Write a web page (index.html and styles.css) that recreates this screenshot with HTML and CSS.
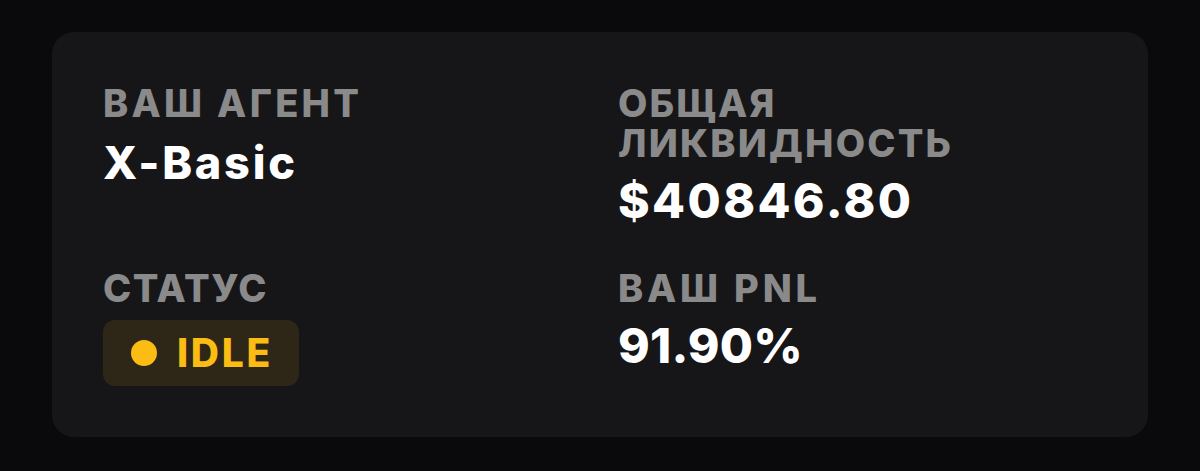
FILE: index.html
```html
<!DOCTYPE html>
<html lang="ru">
<head>
<meta charset="utf-8">
<title>Agent</title>
<link rel="stylesheet" href="styles.css">
</head>
<body>
<div class="card">
  <div class="cell">
    <div class="label label-agent">ВАШ АГЕНТ</div>
    <div class="value value-sm">X-Basic</div>
  </div>
  <div class="cell">
    <div class="label label-multi"><span>ОБЩАЯ</span><span>ЛИКВИДНОСТЬ</span></div>
    <div class="value value-lg">$40846.80</div>
  </div>
  <div class="cell">
    <div class="label label-status">СТАТУС</div>
    <div class="badge"><span class="dot"></span><span class="badge-text">IDLE</span></div>
  </div>
  <div class="cell">
    <div class="label label-wide">ВАШ PNL</div>
    <div class="value value-lg value-tight">91.90%</div>
  </div>
</div>
</body>
</html>
```
FILE: styles.css
```css
html, body {
  margin: 0;
  padding: 0;
  background: #0a0a0c;
}
body {
  padding: 32px 52px;
  font-family: Inter, "Noto Sans", sans-serif;
  font-weight: 700;
  color: #ffffff;
}
.card {
  background: #161618;
  border-radius: 22px;
  padding: 51px;
  display: grid;
  grid-template-columns: 1fr 1fr;
  column-gap: 36px;
  row-gap: 40px;
  align-items: start;
}
.cell {
  display: flex;
  flex-direction: column;
  align-items: flex-start;
}
.label {
  font-size: 38px;
  line-height: 40px;
  color: #8a8a8a;
  letter-spacing: 0.065em;
  font-weight: 800;
}
.label-agent {
  letter-spacing: 0.087em;
}
.label-status {
  letter-spacing: 0.04em;
}
.label-multi {
  display: flex;
  flex-direction: column;
  letter-spacing: 0.058em;
}
.label-wide {
  letter-spacing: 0.1em;
}
.value {
  margin-top: 10px;
  font-weight: 800;
}
.value-sm {
  font-size: 45px;
  line-height: 60px;
  letter-spacing: 0.062em;
}
.value-lg {
  font-size: 48px;
  line-height: 55px;
  letter-spacing: 0.05em;
}
.value-tight {
  letter-spacing: 0.005em;
}
.badge {
  margin-top: 12px;
  height: 66px;
  box-sizing: border-box;
  padding: 0 26px 0 28px;
  display: flex;
  align-items: center;
  gap: 20px;
  background: #2e2718;
  border-radius: 12px;
}
.dot {
  width: 26px;
  height: 26px;
  border-radius: 50%;
  background: #fbbd14;
}
.badge-text {
  font-size: 39px;
  line-height: 40px;
  color: #fbbd14;
  font-weight: 800;
  letter-spacing: 0.07em;
}
```
